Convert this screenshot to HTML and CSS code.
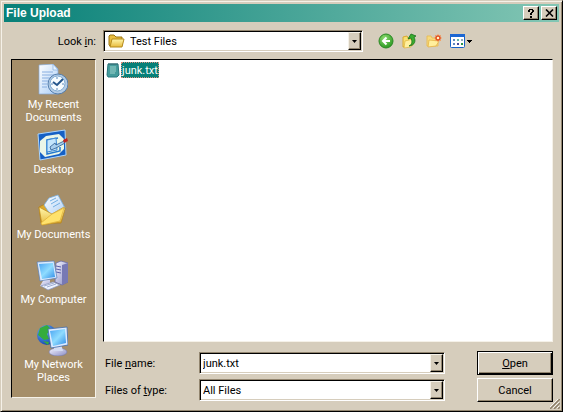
FILE: index.html
```html
<!DOCTYPE html>
<html lang="en">
<head>
<meta charset="utf-8">
<title>File Upload</title>
<link rel="stylesheet" href="styles.css">
</head>
<body>
<svg class="defs" aria-hidden="true">
  <defs>
    <linearGradient id="blue" x1="0" y1="0" x2="1" y2="1"><stop offset="0" stop-color="#4aa4f2"/><stop offset=".5" stop-color="#8fdcff"/><stop offset="1" stop-color="#2f8be6"/></linearGradient>
    <linearGradient id="gold" x1="0" y1="0" x2="0" y2="1"><stop offset="0" stop-color="#fff6ac"/><stop offset="1" stop-color="#e8bb3c"/></linearGradient>
    <linearGradient id="paper" x1="0" y1="0" x2="1" y2="1"><stop offset="0" stop-color="#ffffff"/><stop offset="1" stop-color="#a9cdf5"/></linearGradient>
    <linearGradient id="grey" x1="0" y1="0" x2="1" y2="1"><stop offset="0" stop-color="#f4f4ff"/><stop offset="1" stop-color="#8a8dc4"/></linearGradient>
    <radialGradient id="green" cx=".4" cy=".3" r=".7"><stop offset="0" stop-color="#8fdc70"/><stop offset="1" stop-color="#2d9a22"/></radialGradient>
    <radialGradient id="globe" cx=".35" cy=".3" r=".8"><stop offset="0" stop-color="#6cb4ff"/><stop offset="1" stop-color="#0a3ba8"/></radialGradient>
  </defs>
</svg>
<main class="dialog">
  <header class="titlebar">
    <h1>File Upload</h1>
    <button class="caption" type="button" aria-label="Help"><svg width="8" height="9" viewBox="0 0 8 9"><path d="M1 2V1h1V0h4v1h1v2H6v1H5v2H3V4h1V3h1V1H3v2H1zM3 7h2v2H3z"/></svg></button>
    <button class="caption close" type="button" aria-label="Close"><svg width="9" height="8" viewBox="0 0 9 8"><path d="M1 0.5L8 7.5M8 0.5L1 7.5" stroke="#000" stroke-width="1.6"/></svg></button>
  </header>
  <div class="toolbar">
    <label for="look">Look <u>i</u>n:</label>
    <div class="combo look">
      <svg class="folder" width="17" height="16" viewBox="0 0 17 16"><path d="M1 12V3l1-1h4l2 2h6v9H2z" fill="#e9bd3f" stroke="#9c7614"/><path d="M4 6h12l-2 8H2z" fill="url(#gold)" stroke="#b58b1d"/></svg>
      <select id="look"><option>Test Files</option></select><span class="drop"></span>
    </div>
    <div class="tools">
      <button type="button" aria-label="Back"><svg width="16" height="16" viewBox="0 0 16 16"><circle cx="8" cy="8" r="7" fill="url(#green)" stroke="#2b8824"/><path d="M12 8H5M8.500 4.500L5 8l3.500 3.500" fill="none" stroke="#fff" stroke-width="2"/></svg></button>
      <button type="button" aria-label="Up one level"><svg width="16" height="16" viewBox="0 0 16 16"><path d="M1 14V4l4-1 1 2 5-1v8z" fill="#f7df72" stroke="#d9a931"/><path d="M3 8l8-2-2 8-7 1z" fill="#fff0a0" stroke="#dfb33c" stroke-width=".7"/><path d="M7 13c4-2 3-5 2-8L6 6l3-5 5 2-2 1c2 4 1 8-5 9z" fill="#39ad2f" stroke="#17711b" stroke-width=".8"/></svg></button>
      <button type="button" aria-label="Create new folder"><svg width="16" height="16" viewBox="0 0 16 16"><path d="M1 13V3h4l1 2h6v8z" fill="#f7da7c" stroke="#e8bd5b"/><path d="M3 7l10 1-3 5-8 1z" fill="#ffef9d" stroke="#e5b448" stroke-width=".8"/><path d="M12 1v8M8 5h8M9 2l6 6M15 2L9 8" stroke="#f3a366"/><circle cx="12" cy="5" r="2" fill="#fff3c8" stroke="#e4501e" stroke-width="1.500"/></svg></button>
      <button type="button" aria-label="View menu"><svg width="24" height="16" viewBox="0 0 24 16"><rect x=".5" y="1.500" width="14" height="13" rx="1" fill="#fff" stroke="#1762c7"/><path d="M0 1h15v3H0z" fill="#1c67d3"/><path d="M3 6h2v2H3zM3 10h2v2H3z" fill="#6189bf"/><path d="M7 6h2v2H7z" fill="#62b5a5"/><path d="M7 10h2v2H7z" fill="#4a4b9c"/><path d="M11 6h2v2h-2z" fill="#8da9bc"/><path d="M11 10h2v2h-2z" fill="#299447"/><path d="M17 7h5v1h-1v1h-1v1h-1V9h-1V8h-1z"/></svg></button>
    </div>
  </div>
  <div class="content">
    <nav class="places">
      <a href="#recent"><svg width="32" height="32" viewBox="0 0 32 32"><path d="M3 1l14-1 5 5v25H3z" fill="url(#paper)" stroke="#86abd9" stroke-width=".7"/><path d="M17 0v6h5z" fill="#e8f4ff" stroke="#7ba4d6" stroke-width=".6"/><path d="M6 8h11M6 11h12M6 14h8M6 17h6M6 20h5M6 23h5" stroke="#88aee0"/><circle cx="22" cy="20" r="10" fill="#b4cce5" stroke="#557fad"/><circle cx="21.500" cy="19.500" r="7.500" fill="#f6fcff" stroke="#7eaad2"/><path d="M27 15l-6 6-4-3" fill="none" stroke="#25568c" stroke-width="2"/><path d="M21 13v2M21 24v2M15 20h2M26 20h2" stroke="#5d89ba"/></svg><span>My Recent Documents</span></a>
      <a href="#desktop"><svg width="32" height="32" viewBox="0 0 32 32"><path d="M2 5l27-4 1 25-26 5z" fill="#1560c5" stroke="#a9d5ff"/><path d="M10 7l13-2 5 5v10l-5 5-14 3-5-5V12z" fill="#eaf6e8"/><path d="M22 9L11 11v14l13-3v-4" fill="none" stroke="#2479cf" stroke-width="1.500"/><path d="M11 11l9-2 1 12-10 2z" fill="#c3e5fc" stroke="#3c8ad8"/><path d="M14 18l5-4 1 2 8-4 1 2-9 5-5 2z" fill="#a8cfee" stroke="#28588d" stroke-width=".8"/><path d="M27 11l4-2 1 3-4 2z" fill="#bf2722"/></svg><span>Desktop</span></a>
      <a href="#documents"><svg width="32" height="32" viewBox="0 0 32 32"><path d="M3 13l6-3 3 3 17 1-4 15H5z" fill="#dda92d" stroke="#b58012" stroke-width=".7"/><path d="M13 4l9-3 7 13-13 9-8-12z" fill="url(#paper)" stroke="#78aedf" stroke-width=".8"/><path d="M14 7l6-3M15 10l7-4M17 13l7-4" stroke="#72afe4"/><path d="M3 13l13 7 12-7 1 2-4 13-19 3z" fill="url(#gold)" stroke="#bb8b20" stroke-width=".7"/><path d="M5 29l11-9 12-6-4 13-18 4z" fill="#ffe26c" stroke="#dbac34" stroke-width=".7"/></svg><span>My Documents</span></a>
      <a href="#computer"><svg width="32" height="32" viewBox="0 0 32 32"><path d="M20 4l5-2 7 2v19l-6 3-7-3z" fill="url(#grey)" stroke="#6769a6" stroke-width=".8"/><path d="M26 6v20l6-3V4z" fill="#7779b4"/><path d="M20 7l5 1M20 10l5 1M20 13l5 1" stroke="#5b62a9"/><path d="M8 20l6 1v4l6 1-4 4-12-3z" fill="url(#grey)"/><path d="M1 3l17-1 3 17-17 3z" fill="#d9e9fd" stroke="#567cb8" stroke-width=".7"/><path d="M3 5l14-1 2 14-13 2z" fill="url(#blue)"/><path d="M5 27l12-4 7 3-12 5z" fill="#edf3ff" stroke="#8795bd" stroke-width=".7"/><path d="M8 27l10-3M11 28l9-3" stroke="#9facd0"/></svg><span>My Computer</span></a>
      <a href="#network"><svg width="32" height="32" viewBox="0 0 32 32"><circle cx="11" cy="11" r="10" fill="url(#globe)"/><path d="M4 4l7-3 4 4-4 5 2 5-5 1-6-5zM7 17l6 1-1 3z" fill="#35ac3c"/><ellipse cx="22" cy="28" rx="9" ry="4" fill="url(#grey)" stroke="#777aa9" stroke-width=".6"/><path d="M18 21l7-1 2 7h-9z" fill="#d4dcf2"/><path d="M12 5l19-2 1 18-17 3z" fill="#dceaff" stroke="#426ca9" stroke-width=".8"/><path d="M14 7l15-2 1 14-13 3z" fill="url(#blue)"/></svg><span>My Network Places</span></a>
    </nav>
    <section class="browser">
      <ul class="files">
        <li><svg width="14" height="16" viewBox="1 0 14 16"><path d="M3 2h10l1 11-2 2H3l-1-2z" fill="#449b9b" stroke="#28777d"/><path d="M5 5h6M5 7h6M5 9h6M5 11h5" stroke="#9ed1cb"/><path d="M4 1v2M6 1v2M8 1v2M10 1v2M12 1v2" stroke="#3a6d75"/></svg><button type="button" class="file">junk.txt</button></li>
      </ul>
      <form class="fields">
        <label for="name">File <u>n</u>ame:</label>
        <div class="combo"><input id="name" type="text" value="junk.txt"><button class="drop" type="button" aria-label="Show names"></button></div>
        <button class="action default" type="button"><u>O</u>pen</button>
        <label for="type">Files of <u>t</u>ype:</label>
        <div class="combo"><select id="type"><option>All Files</option></select><span class="drop"></span></div>
        <button class="action" type="button">Cancel</button>
      </form>
    </section>
  </div>
  <svg class="grip" width="10" height="10" viewBox="0 0 10 10" aria-hidden="true"><path d="M0 10L10 0M4 10l6-6M8 10l2-2" stroke="#8e8069" stroke-width="1.500"/><path d="M-1 9L9-1M3 9l6-6M7 9l2-2" stroke="#fff" stroke-width=".8"/></svg>
</main>
</body>
</html>
```
FILE: styles.css
```css
* { box-sizing: border-box; }

body {
  margin: 0;
  background: #d6cdbc;
  color: #000;
  font: 11px/13px Roboto, "Liberation Sans", sans-serif;
}

button, input, select { font: inherit; color: inherit; }
button { padding: 0; }
svg { flex: none; }
.defs { position: absolute; width: 0; height: 0; }

.dialog {
  position: relative;
  display: flex;
  flex-direction: column;
  min-height: 100vh;
  padding: 3px 3px 9px;
  border: 1px solid;
  border-color: #d6cdbc #000 #000 #d6cdbc;
  box-shadow: inset 1px 1px #f5f1e8, inset -1px -1px #92856f;
}

.titlebar {
  display: flex;
  align-items: center;
  height: 18px;
  padding: 0 2px;
  background: linear-gradient(90deg, #078078, #83c6b4);
}

.titlebar h1 {
  flex: 1;
  margin: 0;
  color: #fff;
  font: bold 12px/18px "Liberation Sans", sans-serif;
}

.caption {
  display: grid;
  place-items: center;
  width: 16px;
  height: 14px;
  border: 1px solid;
  border-color: #fff #000 #000 #fff;
  background: #d6cdbc;
  box-shadow: inset -1px -1px #92856f;
}

.close { margin-left: 2px; }

.toolbar {
  display: flex;
  align-items: center;
  gap: 7px;
  padding: 8px 6px 0 7px;
}

.toolbar label { width: 85px; text-align: right; }

.combo {
  position: relative;
  display: flex;
  height: 22px;
  min-width: 0;
  padding: 1px;
  background: #fff;
  border: 1px solid;
  border-color: #92856f #fff #fff #92856f;
  box-shadow: inset 1px 1px #000, inset -1px -1px #d6cdbc;
}

.look { flex: 0 1 260px; }
.folder { position: absolute; left: 4px; top: 2px; }

.combo input, .combo select {
  flex: 1;
  width: 100%;
  min-width: 0;
  padding: 0 18px 0 2px;
  border: 0;
  outline: 0;
  background: transparent;
  appearance: none;
}

.look select { padding-left: 25px; }

.drop {
  position: absolute;
  top: 1px;
  right: 1px;
  bottom: 1px;
  width: 13px;
  border: 1px solid;
  border-color: #f5f1e8 #000 #000 #f5f1e8;
  background: #d6cdbc;
  box-shadow: inset -1px -1px #92856f;
  pointer-events: none;
}

.drop::after {
  content: "";
  position: absolute;
  left: 3px;
  top: 7px;
  width: 5px;
  height: 3px;
  background: #000;
  clip-path: polygon(0 0, 100% 0, 50% 100%);
}

.tools { display: flex; gap: 8px; margin-left: 8px; }
.tools button { display: block; height: 16px; border: 0; background: none; }
.tools svg { display: block; }

.content {
  flex: 1;
  display: grid;
  grid-template-columns: 85px minmax(0, 1fr);
  gap: 7px;
  padding: 7px 6px 0 7px;
}

.places {
  display: flex;
  flex-direction: column;
  margin-bottom: 4px;
  padding-top: 4px;
  background: #a58e69;
  border: 1px solid;
  border-color: #000 #f5f1e8 #f5f1e8 #000;
}

.places a {
  display: flex;
  flex-direction: column;
  align-items: center;
  gap: 2px;
  height: 65px;
  color: #fff;
  text-align: center;
  text-decoration: none;
}

.places svg { margin-right: 4px; }
.places span { max-width: 76px; }

.browser { display: flex; flex-direction: column; gap: 9px; }

.files {
  flex: 1;
  margin: 0;
  padding: 2px;
  list-style: none;
  background: #fff;
  border: 1px solid;
  border-color: #000 #f5f1e8 #f5f1e8 #000;
}

.files li { display: flex; align-items: center; gap: 1px; }

.file {
  height: 16px;
  padding: 0;
  border: 1px dotted #d99080;
  background: #078078;
  color: #fff;
}

.fields {
  display: grid;
  grid-template-columns: 96px minmax(0, 1fr) 76px;
  align-items: center;
  gap: 3px 0;
  margin: 0;
}

.fields label { padding-left: 2px; }
.fields .combo { margin-right: 32px; }

.action {
  height: 24px;
  border: 1px solid;
  border-color: #fff #000 #000 #fff;
  background: #d6cdbc;
  box-shadow: inset -1px -1px #92856f;
}

.default {
  border-color: #000;
  box-shadow: inset 1px 1px #fff, inset -1px -1px #000, inset -2px -2px #92856f;
}

.grip { position: absolute; right: 2px; bottom: 2px; }
```
